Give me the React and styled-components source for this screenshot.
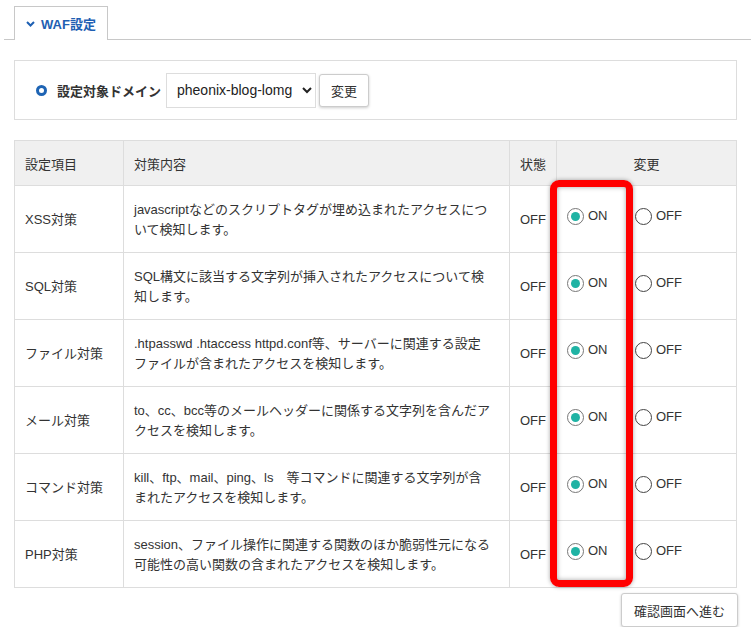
import styled, { createGlobalStyle } from "styled-components";

const GlobalStyle = createGlobalStyle`
    html, body {
        margin: 0;
        padding: 0;
        background: #fff;
    }
    body {
        font-family: "Liberation Sans", "Noto Sans CJK JP", sans-serif;
        color: #333;
        font-size: 13px;
    }
`

const rules = [
    { name: "XSS対策", text: "javascriptなどのスクリプトタグが埋め込まれたアクセスについて検知します。" },
    { name: "SQL対策", text: "SQL構文に該当する文字列が挿入されたアクセスについて検知します。" },
    { name: "ファイル対策", text: ".htpasswd .htaccess httpd.conf等、サーバーに関連する設定ファイルが含まれたアクセスを検知します。" },
    { name: "メール対策", text: "to、cc、bcc等のメールヘッダーに関係する文字列を含んだアクセスを検知します。" },
    { name: "コマンド対策", text: "kill、ftp、mail、ping、ls　等コマンドに関連する文字列が含まれたアクセスを検知します。" },
    { name: "PHP対策", text: "session、ファイル操作に関連する関数のほか脆弱性元になる可能性の高い関数の含まれたアクセスを検知します。" },
]

const App = () => {
    return (
        <StyledPage lang="ja">
            <GlobalStyle />
            <StyledTabBar>
                <StyledTab>
                    <svg width="9" height="6" viewBox="0 0 9 6">
                        <path d="M1 1 L4.5 4.5 L8 1" stroke="#1e60b3" strokeWidth="2" fill="none" />
                    </svg>
                    WAF設定
                </StyledTab>
            </StyledTabBar>
            <StyledBody>
                <StyledDomainBox>
                    <StyledDomainMark />
                    <StyledDomainLabel>設定対象ドメイン</StyledDomainLabel>
                    <StyledSelect defaultValue="pheonix-blog-lomg">
                        <option>pheonix-blog-lomg</option>
                    </StyledSelect>
                    <StyledButton type="button">変更</StyledButton>
                </StyledDomainBox>

                <StyledTableWrap>
                    <StyledTable>
                        <colgroup>
                            <col style={{ width: 109 }} />
                            <col style={{ width: 386 }} />
                            <col style={{ width: 47 }} />
                            <col />
                        </colgroup>
                        <thead>
                            <tr>
                                <StyledTh>設定項目</StyledTh>
                                <StyledTh>対策内容</StyledTh>
                                <StyledTh>状態</StyledTh>
                                <StyledTh $center>変更</StyledTh>
                            </tr>
                        </thead>
                        <tbody>
                            {rules.map((r) => (
                                <tr key={r.name}>
                                    <StyledTd>{r.name}</StyledTd>
                                    <StyledDescTd>{r.text}</StyledDescTd>
                                    <StyledTd>OFF</StyledTd>
                                    <StyledChangeTd>
                                        <StyledOption $width={68}>
                                            <StyledRadio $checked />
                                            ON
                                        </StyledOption>
                                        <StyledOption>
                                            <StyledRadio />
                                            OFF
                                        </StyledOption>
                                    </StyledChangeTd>
                                </tr>
                            ))}
                        </tbody>
                    </StyledTable>
                    <StyledHighlight />
                </StyledTableWrap>

                <StyledFooter>
                    <StyledButton type="button" $wide>確認画面へ進む</StyledButton>
                </StyledFooter>
            </StyledBody>
        </StyledPage>
    )
}

const StyledPage = styled.div `
    padding: 6px 0 0 4px;
`

const StyledTabBar = styled.div `
    display: flex;
    padding-left: 10px;
    border-bottom: 1px solid #c8c8c8;
`

const StyledTab = styled.div `
    display: flex;
    align-items: center;
    gap: 6px;
    height: 34px;
    padding: 0 11px 0 11px;
    box-sizing: border-box;
    white-space: nowrap;
    border: 1px solid #c8c8c8;
    border-bottom: none;
    margin-bottom: -1px;
    background: #fff;
    color: #1e60b3;
    font-weight: 700;
    font-size: 13px;
    svg {
        margin-top: 1px;
    }
`

const StyledBody = styled.div `
    padding: 20px 14px 0 10px;
`

const StyledDomainBox = styled.div `
    display: flex;
    align-items: center;
    height: 60px;
    box-sizing: border-box;
    border: 1px solid #ddd;
    padding: 0 0 0 21px;
`

const StyledDomainMark = styled.span `
    width: 11px;
    height: 11px;
    border-radius: 50%;
    border: 3px solid #1e64b4;
    box-sizing: border-box;
    margin-right: 10px;
`

const StyledDomainLabel = styled.span `
    font-weight: 700;
    font-size: 13px;
    margin-right: 5px;
`

const StyledSelect = styled.select `
    width: 150px;
    height: 35px;
    border: 1px solid #ddd;
    background: #fff;
    font-family: "Liberation Sans", sans-serif;
    font-size: 14px;
    color: #222;
    padding: 0 0 0 6px;
    margin-right: 3px;
`

const StyledButton = styled.button `
    height: ${(p) => (p.$wide ? "34px" : "33px")};
    padding: 0 ${(p) => (p.$wide ? "12px" : "11px")};
    border: 1px solid #ccc;
    border-radius: 3px;
    background: #fff;
    box-shadow: 0 1px 3px rgba(0, 0, 0, 0.2);
    font-family: "Liberation Sans", "Noto Sans CJK JP", sans-serif;
    font-size: 13px;
    color: #333;
    cursor: pointer;
`

const StyledTableWrap = styled.div `
    position: relative;
    margin-top: 20px;
`

const StyledTable = styled.table `
    width: 100%;
    border-collapse: collapse;
    table-layout: fixed;
`

const StyledTh = styled.th `
    height: 45px;
    box-sizing: border-box;
    background: #f0f0f0;
    border: 1px solid #ddd;
    font-weight: 400;
    font-size: 13px;
    text-align: ${(p) => (p.$center ? "center" : "left")};
    padding: 0 10px;
`

const StyledTd = styled.td `
    height: 67px;
    box-sizing: border-box;
    border: 1px solid #ddd;
    padding: 6px 10px 4px 10px;
    font-size: 13px;
    line-height: 20px;
    vertical-align: middle;
`

const StyledDescTd = styled(StyledTd) `
    padding-right: 15px;
    line-break: strict;
`

const StyledChangeTd = styled(StyledTd) `
    padding: 0 10px 6px 10px;
    white-space: nowrap;
`

const StyledOption = styled.label `
    display: inline-flex;
    align-items: center;
    gap: 4px;
    width: ${(p) => (p.$width ? `${p.$width}px` : "auto")};
    font-size: 13px;
    vertical-align: middle;
`

const StyledRadio = styled.span `
    position: relative;
    width: 17px;
    height: 17px;
    box-sizing: border-box;
    border-radius: 50%;
    border: 1px solid ${(p) => (p.$checked ? "#777" : "#444")};
    background: #fff;
    &::after {
        content: "";
        display: ${(p) => (p.$checked ? "block" : "none")};
        position: absolute;
        left: 3px;
        top: 3px;
        width: 9px;
        height: 9px;
        border-radius: 50%;
        background: #1fb3a4;
    }
`

const StyledHighlight = styled.div `
    position: absolute;
    left: 536px;
    top: 40px;
    width: 83px;
    height: 407px;
    box-sizing: border-box;
    border: 7px solid #ff0000;
    border-radius: 9px;
    box-shadow: 0 0 4px rgba(0, 0, 0, 0.35), inset 0 0 5px rgba(0, 0, 0, 0.35);
    pointer-events: none;
`

const StyledFooter = styled.div `
    display: flex;
    justify-content: flex-end;
    margin: 5px -1px 0 0;
`

export default App;
